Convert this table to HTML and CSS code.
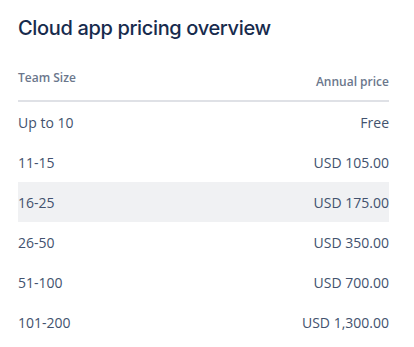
FILE: index.html
```html
<!DOCTYPE html>
<html>
<head>
<meta charset="utf-8">
<link rel="stylesheet" href="styles.css">
</head>
<body>
<div class="panel">
  <h2 class="title">Cloud app pricing overview</h2>
  <table class="pricing">
    <thead>
      <tr>
        <th class="col-size">Team Size</th>
        <th class="col-price">Annual price</th>
      </tr>
    </thead>
    <tbody>
      <tr><td>Up to 10</td><td class="price">Free</td></tr>
      <tr><td>11-15</td><td class="price">USD 105.00</td></tr>
      <tr class="shaded"><td>16-25</td><td class="price">USD 175.00</td></tr>
      <tr><td>26-50</td><td class="price">USD 350.00</td></tr>
      <tr><td>51-100</td><td class="price">USD 700.00</td></tr>
      <tr><td>101-200</td><td class="price">USD 1,300.00</td></tr>
    </tbody>
  </table>
</div>
</body>
</html>
```
FILE: styles.css
```css
html, body {
  margin: 0;
  padding: 0;
  background: #ffffff;
}
body {
  font-family: "Open Sans", "Noto Sans", sans-serif;
  color: #42526e;
}
.panel {
  width: 371px;
  margin-left: 18px;
  padding-top: 14px;
}
.title {
  margin: 0;
  font-family: "Inter", "Noto Sans", sans-serif;
  font-weight: 500;
  font-size: 20px;
  line-height: 28px;
  color: #172b4d;
  letter-spacing: -0.35px;
}
.pricing {
  width: 100%;
  border-collapse: collapse;
  margin-top: 23px;
}
.pricing th {
  font-size: 12px;
  font-weight: 600;
  color: #6b778c;
  padding: 0;
  border-bottom: 2px solid #dfe1e6;
}
.col-size {
  text-align: left;
  vertical-align: top;
  height: 31px;
  padding-top: 4px !important;
}
.col-price {
  text-align: right;
  vertical-align: bottom;
  padding-bottom: 10px !important;
}
.pricing td {
  font-size: 14px;
  height: 40px;
  padding: 0;
  vertical-align: middle;
}
.pricing .price {
  text-align: right;
}
.shaded td {
  background: #f0f1f3;
}
```
